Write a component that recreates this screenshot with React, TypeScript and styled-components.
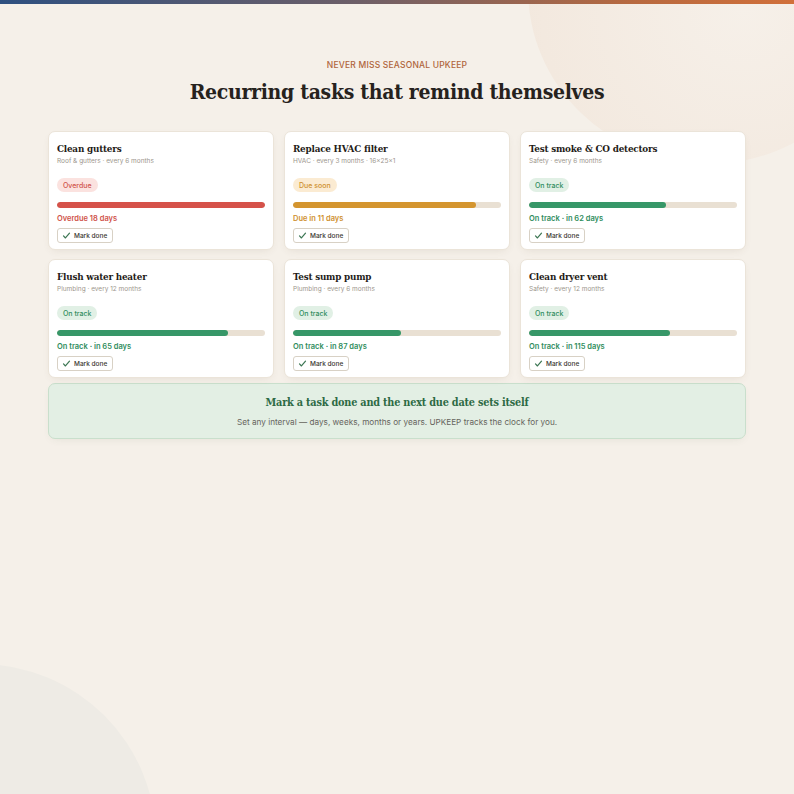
import React from "react";
import styled, { createGlobalStyle } from "styled-components";

type Status = "overdue" | "soon" | "ok";

interface Task {
  title: string;
  meta: string;
  status: Status;
  progress: number;
  note: string;
}

const tasks: Task[] = [
  { title: "Clean gutters", meta: "Roof & gutters · every 6 months", status: "overdue", progress: 100, note: "Overdue 18 days" },
  { title: "Replace HVAC filter", meta: "HVAC · every 3 months · 16x25x1", status: "soon", progress: 88, note: "Due in 11 days" },
  { title: "Test smoke & CO detectors", meta: "Safety · every 6 months", status: "ok", progress: 66, note: "On track · in 62 days" },
  { title: "Flush water heater", meta: "Plumbing · every 12 months", status: "ok", progress: 82, note: "On track · in 65 days" },
  { title: "Test sump pump", meta: "Plumbing · every 6 months", status: "ok", progress: 52, note: "On track · in 87 days" },
  { title: "Clean dryer vent", meta: "Safety · every 12 months", status: "ok", progress: 68, note: "On track · in 115 days" },
];

const tone: Record<Status, { bar: string; text: string; pill: string; label: string }> = {
  overdue: { bar: "#d5524a", text: "#d0534a", pill: "#fbe2df", label: "Overdue" },
  soon: { bar: "#d4952f", text: "#cf912f", pill: "#fbebd2", label: "Due soon" },
  ok: { bar: "#379768", text: "#2f8d5d", pill: "#e1f0e5", label: "On track" },
};

const GlobalStyle = createGlobalStyle`
  body {
    margin: 0;
    background: #f5f0e9;
    font-family: Inter, "Noto Sans", sans-serif;
  }
`;

const Page = styled.div`
  position: relative;
  min-height: 794px;
  overflow: hidden;
  background: #f5f0e9;

  /* soft blobs in the corners */
  &::before {
    content: "";
    position: absolute;
    left: 528px;
    top: -186px;
    width: 360px;
    height: 350px;
    border-radius: 50%;
    background: radial-gradient(circle at 60% 55%, #f6f0e9 0%, #f3e9df 70%, #f0e5d9 100%);
  }

  &::after {
    content: "";
    position: absolute;
    left: -196px;
    top: 664px;
    width: 352px;
    height: 352px;
    border-radius: 50%;
    background: #eeebe5;
  }
`;

const TopBar = styled.div`
  position: relative;
  z-index: 1;
  height: 4px;
  background: linear-gradient(90deg, #2e5080 0%, #6d5f68 45%, #b8693f 80%, #d1703a 100%);
`;

const Content = styled.main`
  position: relative;
  z-index: 1;
  width: 698px;
  margin: 0 auto;
  padding-top: 56px;
`;

const Eyebrow = styled.div`
  text-align: center;
  font-size: 8.5px;
  line-height: 10px;
  font-weight: 500;
  letter-spacing: 0.2px;
  color: #b0653b;
`;

const slab = `
  font-family: "DejaVu Serif", serif;
  font-stretch: condensed;
  font-weight: 700;
`;

const Heading = styled.h1`
  margin: 10px 0 0;
  text-align: center;
  ${slab}
  font-size: 21px;
  line-height: 24px;
  letter-spacing: -0.3px;
  color: #26221d;
`;

const Grid = styled.div`
  display: grid;
  grid-template-columns: repeat(3, 1fr);
  gap: 9px 10px;
  margin-top: 27px;
`;

const Card = styled.div`
  background: #ffffff;
  border: 1px solid #ebe4d9;
  border-radius: 7px;
  padding: 10px 8px 5px;
  box-shadow: 0 3px 10px -4px rgba(90, 70, 40, 0.14);
`;

const Title = styled.h3`
  margin: 0;
  ${slab}
  font-size: 9.8px;
  line-height: 14px;
  letter-spacing: -0.2px;
  color: #1f1c18;
`;

const Meta = styled.div`
  font-size: 6.5px;
  line-height: 11px;
  color: #9c968d;
`;

const Pill = styled.span<{ $status: Status }>`
  display: inline-flex;
  align-items: center;
  height: 14px;
  margin-top: 11px;
  padding: 0 6px;
  border-radius: 7px;
  font-size: 7px;
  font-weight: 500;
  background: ${(p) => tone[p.$status].pill};
  color: ${(p) => tone[p.$status].text};
`;

const Track = styled.div`
  height: 6px;
  margin-top: 10px;
  border-radius: 3px;
  background: #e9e0d3;
  overflow: hidden;
`;

const Fill = styled.div<{ $status: Status }>`
  height: 100%;
  border-radius: 3px;
  background: ${(p) => tone[p.$status].bar};
`;

const Note = styled.div<{ $status: Status }>`
  margin-top: 5px;
  font-size: 7.5px;
  line-height: 11px;
  font-weight: 600;
  color: ${(p) => tone[p.$status].text};
`;

const DoneButton = styled.button`
  display: inline-flex;
  align-items: center;
  gap: 3px;
  height: 15px;
  margin-top: 3px;
  padding: 0 5px 0 4px;
  border: 1px solid #d8d1c5;
  border-radius: 3px;
  background: #ffffff;
  font-family: Inter, "Noto Sans", sans-serif;
  font-size: 6.5px;
  font-weight: 500;
  color: #3a3631;
  cursor: pointer;
`;

const Banner = styled.div`
  margin-top: 5px;
  padding: 11px 16px 10px;
  border: 1px solid #c9dfcc;
  border-radius: 7px;
  background: #e3efe4;
  text-align: center;
  box-shadow: 0 3px 10px -4px rgba(60, 90, 60, 0.12);
`;

const BannerTitle = styled.h2`
  margin: 0;
  ${slab}
  font-size: 10.8px;
  line-height: 16px;
  letter-spacing: -0.2px;
  color: #2d6a44;
`;

const BannerText = styled.p`
  margin: 5px 0 0;
  font-size: 8.2px;
  line-height: 12px;
  color: #66645d;
`;

function Check() {
  return (
    <svg width="9" height="9" viewBox="0 0 12 12" fill="none" stroke="#3c7653" strokeWidth="1.6" strokeLinecap="round" strokeLinejoin="round">
      <path d="M2 6.5l2.6 2.8L10 2.8" />
    </svg>
  );
}

function TaskCard({ task }: { task: Task }) {
  return (
    <Card>
      <Title>{task.title}</Title>
      <Meta>{task.meta}</Meta>
      <Pill $status={task.status}>{tone[task.status].label}</Pill>
      <Track>
        <Fill $status={task.status} style={{ width: `${task.progress}%` }} />
      </Track>
      <Note $status={task.status}>{task.note}</Note>
      <DoneButton>
        <Check />
        Mark done
      </DoneButton>
    </Card>
  );
}

export default function App() {
  return (
    <Page>
      <GlobalStyle />
      <TopBar />
      <Content>
        <Eyebrow>NEVER MISS SEASONAL UPKEEP</Eyebrow>
        <Heading>Recurring tasks that remind themselves</Heading>
        <Grid>
          {tasks.map((t) => (
            <TaskCard key={t.title} task={t} />
          ))}
        </Grid>
        <Banner>
          <BannerTitle>Mark a task done and the next due date sets itself</BannerTitle>
          <BannerText>Set any interval — days, weeks, months or years. UPKEEP tracks the clock for you.</BannerText>
        </Banner>
      </Content>
    </Page>
  );
}
